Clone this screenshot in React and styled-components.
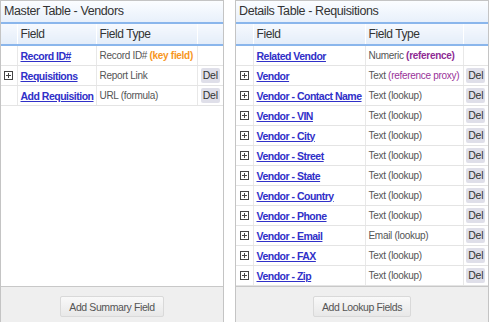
import React from "react";
import styled, { createGlobalStyle } from "styled-components";

const GlobalStyle = createGlobalStyle`
  html, body {
    margin: 0;
    padding: 0;
    background: #fff;
    overflow: hidden;
  }
  body {
    font-family: "Liberation Sans", Arial, sans-serif;
  }
`;

const Page = styled.div`
  display: flex;
  gap: 11px;
  height: 322px;
  overflow: hidden;
`;

const Panel = styled.div`
  width: ${p => p.width}px;
  flex: none;
  height: 340px;
  border: 1px solid #c4c4c4;
  display: flex;
  flex-direction: column;
  box-sizing: border-box;
`;

const PanelTitle = styled.div`
  height: 21px;
  line-height: 21px;
  padding-left: 3px;
  font-size: 12.5px;
  letter-spacing: -0.4px;
  color: #333;
  background: linear-gradient(#fbfdff, #e8f0fb);
  border-bottom: 2px solid #8ab6ec;
`;

const TableArea = styled.div`
  height: 262px;
  flex: none;
  background: #fff;
`;

const Table = styled.table`
  width: 100%;
  border-collapse: collapse;
  table-layout: fixed;
`;

const HeadCell = styled.th`
  height: 20px;
  padding: 0 0 0 3px;
  text-align: left;
  font-weight: normal;
  font-size: 12px;
  letter-spacing: -0.4px;
  color: #333;
  background: linear-gradient(#f6f9fe, #e4edf9);
  border-bottom: 2px solid #8ab6ec;
  border-right: 1px solid #fff;
  &:last-child {
    border-right: none;
  }
`;

const Cell = styled.td`
  height: 19px;
  padding: 0 0 0 ${p => (p.tight ? 0 : 3)}px;
  border-bottom: 1px solid #e4e4e4;
  border-right: 1px solid #e8e8e8;
  font-size: 10px;
  letter-spacing: -0.3px;
  color: #555;
  white-space: nowrap;
  overflow: hidden;
  text-align: ${p => (p.center ? "center" : "left")};
  &:last-child {
    border-right: none;
  }
`;

const FieldLink = styled.a`
  color: #3030c8;
  font-size: 10.5px;
  letter-spacing: -0.5px;
  font-weight: bold;
  text-decoration: underline;
  cursor: pointer;
`;

const Note = styled.span`
  color: ${p => p.color};
  font-weight: ${p => (p.bold ? "bold" : "normal")};
`;

const DelButton = styled.span`
  display: inline-block;
  width: 19px;
  height: 15px;
  line-height: 15px;
  text-align: center;
  background: #dfdfe9;
  border-radius: 2px;
  color: #333;
  font-size: 10.5px;
  letter-spacing: -0.3px;
`;

const Footer = styled.div`
  flex: 1;
  border-top: 1px solid #c8c8c8;
  background: #efefef;
  display: flex;
  justify-content: center;
  align-items: flex-start;
  padding-top: 9px;
`;

const FooterButton = styled.button`
  height: 21px;
  padding: 0 8px;
  font-family: inherit;
  font-size: 10.5px;
  letter-spacing: -0.4px;
  color: #555;
  background: linear-gradient(#f9f9f9, #e8e8e8);
  border: 1px solid #d9d9d9;
  border-radius: 2px;
`;

const ExpandIcon = () => (
  <svg width="9" height="9" viewBox="0 0 9 9" style={{ display: "block", margin: "0 auto" }}>
    <rect x="0.5" y="0.5" width="8" height="8" fill="#fff" stroke="#444" />
    <path d="M2 4.5h5M4.5 2v5" stroke="#444" />
  </svg>
);

const masterRows = [
  { name: "Record ID#", type: "Record ID#", note: " (key field)", noteColor: "#f7961e", bold: true },
  { name: "Requisitions", type: "Report Link", expand: true, del: true },
  { name: "Add Requisition", type: "URL (formula)", del: true },
];

const lookups = ["Contact Name", "VIN", "City", "Street", "State", "Country", "Phone", "Email", "FAX", "Zip"];

const detailRows = [
  { name: "Related Vendor", type: "Numeric", note: " (reference)", noteColor: "#8e2a94", bold: true },
  { name: "Vendor", type: "Text", note: " (reference proxy)", noteColor: "#993399", expand: true, del: true },
  ...lookups.map(l => ({
    name: "Vendor - " + l,
    type: (l === "Email" ? "Email" : "Text") + " (lookup)",
    expand: true,
    del: true,
  })),
];

function FieldTable({ cols, rows }) {
  return (
    <Table>
      <colgroup>
        {cols.map((w, i) => (
          <col key={i} style={{ width: w }} />
        ))}
      </colgroup>
      <thead>
        <tr>
          <HeadCell />
          <HeadCell>Field</HeadCell>
          <HeadCell>Field Type</HeadCell>
          <HeadCell />
        </tr>
      </thead>
      <tbody>
        {rows.map(r => (
          <tr key={r.name}>
            <Cell tight>{r.expand && <ExpandIcon />}</Cell>
            <Cell>
              <FieldLink>{r.name}</FieldLink>
            </Cell>
            <Cell>
              {r.type}
              {r.note && (
                <Note color={r.noteColor} bold={r.bold}>
                  {r.note}
                </Note>
              )}
            </Cell>
            <Cell center tight>{r.del && <DelButton>Del</DelButton>}</Cell>
          </tr>
        ))}
      </tbody>
    </Table>
  );
}

export default function App() {
  return (
    <>
      <GlobalStyle />
      <Page>
        <Panel width={224}>
          <PanelTitle>Master Table - Vendors</PanelTitle>
          <TableArea>
            <FieldTable cols={[16, 79, 101, 26]} rows={masterRows} />
          </TableArea>
          <Footer>
            <FooterButton>Add Summary Field</FooterButton>
          </Footer>
        </Panel>
        <Panel width={254}>
          <PanelTitle>Details Table - Requisitions</PanelTitle>
          <TableArea>
            <FieldTable cols={[17, 112, 98, 25]} rows={detailRows} />
          </TableArea>
          <Footer>
            <FooterButton>Add Lookup Fields</FooterButton>
          </Footer>
        </Panel>
      </Page>
    </>
  );
}
